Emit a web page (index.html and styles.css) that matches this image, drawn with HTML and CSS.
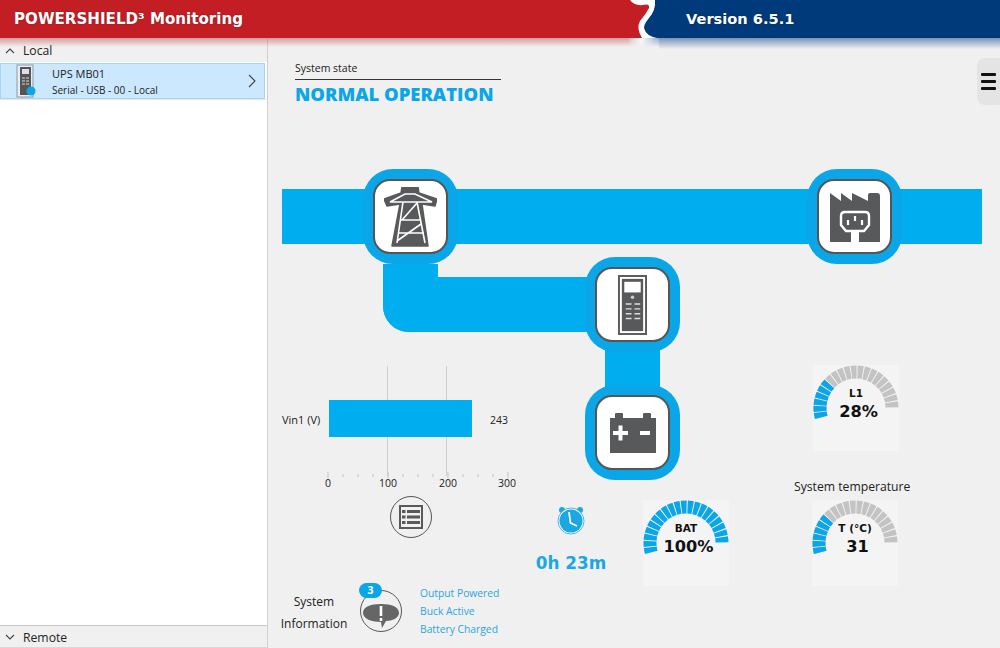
FILE: index.html
```html
<!DOCTYPE html>
<html lang="en">
<head>
    <meta charset="UTF-8">
    <title>POWERSHIELD3 Monitoring</title>
    <link rel="stylesheet" href="styles.css">
</head>
<body>
    <svg class="defs">
        <defs>
            <path id="arc" d="M8.23 52.32A36 36 0 1 1 79 43"/>
        </defs>
    </svg>

    <header class="topbar">
        <div class="brand">POWERSHIELD³ Monitoring</div>
        <svg class="wave" width="30" height="38" viewBox="0 0 30 38">
            <rect width="30" height="38" fill="#fff"/>
            <path d="M0 0H1Q5 6 14 5Q21 3 20 8Q17 14 11 21Q7 28 13 38H0Z" fill="#c41e25"/>
            <path d="M26 0H30V38H28Q17 36 15 28Q15 24 20 18Q27 10 26 0Z" fill="#003a7a"/>
        </svg>
        <div class="version">Version 6.5.1</div>
    </header>

    <div class="layout">
        <aside class="sidebar">
            <div class="group-head">
                <svg width="10" height="6" viewBox="0 0 10 6"><path d="M1 5L5 1L9 5" class="chev"/></svg>
                <span>Local</span>
            </div>
            <div class="device">
                <svg class="device-icon" width="22" height="34" viewBox="0 0 22 34">
                    <rect x="1" y="1" width="16" height="32" fill="#e8eef3" stroke="#8a98a4"/>
                    <rect x="4" y="3" width="11" height="28" fill="#555"/>
                    <rect x="6" y="5" width="7" height="5" fill="#dde"/>
                    <path d="M6 14h3M10 14h3M6 17h3M10 17h3M6 20h3M10 20h3" stroke="#ddd"/>
                    <circle cx="15" cy="27" r="4.5" fill="#0fa5e9"/>
                </svg>
                <div class="device-text">
                    <div>UPS MB01</div>
                    <div class="device-sub">Serial - USB - 00 - Local</div>
                </div>
                <svg class="device-arrow" width="8" height="14" viewBox="0 0 8 14"><path d="M1 1L7 7L1 13" class="chev"/></svg>
            </div>
            <div class="sidebar-space"></div>
            <div class="group-head remote">
                <svg width="10" height="6" viewBox="0 0 10 6"><path d="M1 1L5 5L9 1" class="chev"/></svg>
                <span>Remote</span>
            </div>
        </aside>

        <main class="canvas">
            <div class="state">
                <div class="state-label">System state</div>
                <div class="state-value">NORMAL OPERATION</div>
            </div>

            <div class="menu-tab">
                <span></span><span></span><span></span>
            </div>

            <!-- power flow lines -->
            <div class="line line-main"></div>
            <div class="line line-bypass"></div>
            <div class="line line-bat"></div>

            <div class="node node-input">
                <div class="node-face">
                    <svg width="53" height="60" viewBox="0 0 53 60">
                        <path d="M18 0H34L35 6L53 12L51 19L38 17L44 59H8L16 17L3 19L0 12L17 6Z" fill="#58595b" stroke="#58595b" stroke-width="1.500" stroke-linejoin="round"/>
                        <path d="M6 15L21 7H31L48 15ZM19 15L13 56M33 15L41 56M17 33H36M18 33L33 16M13 54L37 37M14 46H40" fill="none" stroke="#fff" stroke-width="1.600"/>
                    </svg>
                </div>
            </div>
            <div class="node node-output">
                <div class="node-face">
                    <svg width="50" height="50" viewBox="0 0 50 50">
                        <path d="M0 1L11 9V1L22 9V1L38 9V3Q38 1 40 1H47Q50 1 50 4V50H0Z" fill="#58595b"/>
                        <rect x="21" y="38" width="8" height="12" fill="#fff"/>
                        <path d="M15 20H35Q39 20 39 24V33L34 39H16L11 33V24Q11 20 15 20Z" fill="#58595b" stroke="#fff" stroke-width="2.400"/>
                        <path d="M25 24V29M18 28V33M32 28V33" stroke="#fff" stroke-width="2.200"/>
                    </svg>
                </div>
            </div>
            <div class="node node-ups">
                <div class="node-face">
                    <svg width="29" height="60" viewBox="0 0 30 62">
                        <rect x="1" y="1" width="28" height="60" fill="#fff" stroke="#58595b" stroke-width="2"/>
                        <rect x="4" y="4" width="22" height="54" fill="#58595b"/>
                        <rect x="6.500" y="7" width="17" height="11" fill="#fff"/>
                        <circle cx="15" cy="23" r="1.800" fill="#ccc"/>
                        <path d="M8 30h6M17 30h6M8 35h6M17 35h6M8 40h6M17 40h6M8 45h6M17 45h6" stroke="#ddd" stroke-width="1.400"/>
                    </svg>
                </div>
            </div>
            <div class="node node-battery">
                <div class="node-face">
                    <svg width="46" height="40" viewBox="0 0 46 40">
                        <path d="M0 5H5V1Q5 0 6 0H12Q13 0 13 1V5H33V1Q33 0 34 0H40Q41 0 41 1V5H46V40H0Z" fill="#58595b"/>
                        <path d="M3 20H18M10.500 12.500V27.500M30 20H40" stroke="#fff" stroke-width="4"/>
                    </svg>
                </div>
            </div>

            <!-- input voltage bar chart -->
            <div class="chart">
                <div class="grid-line grid-100"></div>
                <div class="grid-line grid-200"></div>
                <div class="bar-label">Vin1 (V)</div>
                <div class="bar"></div>
                <div class="bar-value">243</div>
                <svg class="ticks" width="182" height="6" viewBox="0 0 182 6">
                    <path d="M1 0v6M16 2v3M31 2v3M46 2v3M61 0v6M76 2v3M91 2v3M106 2v3M121 0v6M136 2v3M151 2v3M166 2v3M181 0v6" stroke="#c4c4c4"/>
                </svg>
                <div class="tick-label tick-0">0</div>
                <div class="tick-label tick-100">100</div>
                <div class="tick-label tick-200">200</div>
                <div class="tick-label tick-300">300</div>
            </div>
            <div class="table-btn">
                <svg width="24" height="24" viewBox="0 0 24 24">
                    <rect x="1" y="1" width="22" height="22" fill="none" stroke="#58595b" stroke-width="2"/>
                    <path d="M3 6.500H6.500M8 6.500H21M3 12H6.500M8 12H21M3 17.500H6.500M8 17.500H21" stroke="#58595b" stroke-width="2.800"/>
                </svg>
            </div>

            <!-- autonomy -->
            <div class="autonomy">
                <svg width="28" height="29" viewBox="0 0 28 29">
                    <circle cx="5" cy="4" r="3" fill="#1aa7e2"/>
                    <circle cx="23" cy="4" r="3" fill="#1aa7e2"/>
                    <circle cx="14" cy="15" r="13" fill="#fff"/>
                    <circle cx="14" cy="15" r="13" fill="none" stroke="#1aa7e2" stroke-width="0.800"/>
                    <circle cx="14" cy="15" r="11.500" fill="#1aa7e2"/>
                    <path d="M12 6L13.500 17L20 20" fill="none" stroke="#fff" stroke-width="1.800"/>
                </svg>
                <div class="autonomy-time">0h 23m</div>
            </div>

            <div class="gauge gauge-bat">
                <svg width="86" height="60" viewBox="0 0 86 60">
                    <use href="#arc" class="seg seg-on seg-all"/>
                </svg>
                <div class="gauge-name">BAT</div>
                <div class="gauge-value">100%</div>
            </div>

            <div class="gauge gauge-load">
                <svg width="86" height="60" viewBox="0 0 86 60">
                    <use href="#arc" class="seg seg-off seg-all"/>
                    <use href="#arc" class="seg seg-on seg-part"/>
                </svg>
                <div class="gauge-name">L1</div>
                <div class="gauge-value">28%</div>
            </div>

            <div class="temp-title">System temperature</div>
            <div class="gauge gauge-temp">
                <svg width="86" height="60" viewBox="0 0 86 60">
                    <use href="#arc" class="seg seg-off seg-all"/>
                    <use href="#arc" class="seg seg-on seg-part"/>
                </svg>
                <div class="gauge-name">T (°C)</div>
                <div class="gauge-value">31</div>
            </div>

            <!-- system information -->
            <div class="sysinfo">
                <div class="sysinfo-title">System<br>Information</div>
                <div class="alert">
                    <svg width="42" height="42" viewBox="0 0 42 42">
                        <circle cx="21" cy="21" r="20.500" fill="none" stroke="#58595b" stroke-width="1"/>
                        <path d="M21 14C32 14 39 17 39 23C39 28 32 31 26 31L22 38L21 32C10 32 3 28 3 23C3 17 10 14 21 14Z" fill="#666"/>
                        <path d="M21 16V26M21 28V31" stroke="#fff" stroke-width="2.600"/>
                    </svg>
                    <div class="alert-badge">3</div>
                </div>
                <div class="sysinfo-list">
                    <div>Output Powered</div>
                    <div>Buck Active</div>
                    <div>Battery Charged</div>
                </div>
            </div>
        </main>
    </div>
</body>
</html>
```

FILE: styles.css
```css
html, body {
    margin: 0;
    height: 100%;
    overflow: hidden;
}
body {
    font-family: "Open Sans", "Noto Sans", sans-serif;
    font-size: 12px;
    color: #222;
    background: #f0f0f0;
    display: flex;
    flex-direction: column;
}
.defs {
    width: 0;
    height: 0;
    position: absolute;
}

/* top bar */
.topbar {
    display: flex;
    height: 38px;
    flex: none;
    position: relative;
    z-index: 2;
    font-family: "DejaVu Sans", sans-serif;
    font-weight: bold;
    color: #fff;
    text-shadow: 0 0 2px rgba(0,0,0,0.3);
}
.topbar::after {
    content: "";
    position: absolute;
    left: 629px;
    width: 30px;
    top: 100%;
    height: 9px;
    background: linear-gradient(90deg, rgba(190,120,120,0.5), rgba(255,255,255,0.8) 40%, rgba(80,115,165,0.6));
    -webkit-mask-image: linear-gradient(#000, transparent);
}
.brand {
    width: 629px;
    box-sizing: border-box;
    padding-left: 14px;
    line-height: 38px;
    font-size: 15.100px;
    background: #c41e25;
    position: relative;
}
.brand::after {
    content: "";
    position: absolute;
    left: 0;
    right: 0;
    top: 100%;
    height: 9px;
    background: linear-gradient(rgba(190,90,90,0.55), rgba(240,240,240,0));
}
.wave {
    flex: none;
    display: block;
}
.version {
    flex: 1;
    padding-left: 27px;
    line-height: 38px;
    font-size: 14.600px;
    background: #003a7a;
    position: relative;
}
.version::after {
    content: "";
    position: absolute;
    left: 0;
    right: 0;
    top: 100%;
    height: 11px;
    background: linear-gradient(rgba(80,115,165,0.75), rgba(240,240,240,0));
}

.layout {
    flex: 1;
    display: flex;
    min-height: 0;
}

/* sidebar */
.sidebar {
    width: 267px;
    flex: none;
    display: flex;
    flex-direction: column;
    background: #fff;
    border-right: 1px solid #d0d0d0;
}
.group-head {
    height: 24px;
    display: flex;
    align-items: center;
    gap: 8px;
    padding-left: 5px;
    padding-top: 1px;
    box-sizing: border-box;
    background: #f0f0f0;
    font-size: 12.200px;
}
.group-head.remote {
    height: 23px;
    border-top: 1px solid #c8c8c8;
    border-bottom: 1px solid #d8d8d8;
}
.chev {
    fill: none;
    stroke: #444;
    stroke-width: 1.100;
}
.device {
    height: 36px;
    margin-top: 1px;
    margin-right: 2px;
    box-sizing: border-box;
    display: flex;
    align-items: center;
    background: #cce8ff;
    border: 1px solid #a8d4f5;
    padding: 0 8px 0 15px;
    font-size: 11px;
    line-height: 17px;
}
.device-text {
    flex: 1;
    margin-left: 14px;
    padding-top: 2px;
}
.device-sub {
    font-size: 10px;
}
.sidebar-space {
    flex: 1;
    border-top: 1px solid #e8e8e8;
}

/* main canvas: the flow diagram sits at fixed places */
.canvas {
    flex: 1;
    position: relative;
}
.state {
    position: absolute;
    left: 27px;
    top: 23px;
    width: 206px;
}
.state-label {
    font-size: 10.500px;
    line-height: 14px;
    padding-bottom: 4px;
    border-bottom: 1px solid #333;
}
.state-value {
    color: #0ba6e8;
    font-weight: 800;
    font-size: 18.400px;
    line-height: 27px;
    white-space: nowrap;
}
.menu-tab {
    position: absolute;
    right: 0;
    top: 20px;
    width: 23px;
    height: 47px;
    box-sizing: border-box;
    padding: 15px 0 0 4px;
    background: #e4e4e4;
    border-radius: 8px 0 0 8px;
    display: flex;
    flex-direction: column;
    gap: 4px;
}
.menu-tab span {
    width: 15px;
    height: 3px;
    background: #111;
    border-radius: 1px;
}

.line {
    position: absolute;
    background: #00adef;
}
.line-main {
    left: 14px;
    top: 151px;
    width: 700px;
    height: 55px;
}
.line-bypass {
    left: 115px;
    top: 226px;
    width: 220px;
    height: 68px;
    box-sizing: border-box;
    background: none;
    border-left: 55px solid #00adef;
    border-bottom: 55px solid #00adef;
    border-bottom-left-radius: 26px;
}
.line-bat {
    left: 337px;
    top: 310px;
    width: 55px;
    height: 40px;
}

.node {
    position: absolute;
    width: 95px;
    height: 95px;
    box-sizing: border-box;
    padding: 10px;
    background: #0ba6e8;
    border-radius: 30px;
}
.node-input { left: 95px; top: 131px; }
.node-output { left: 539px; top: 131px; }
.node-ups { left: 317px; top: 219px; }
.node-battery { left: 317px; top: 347px; }
.node-face {
    width: 100%;
    height: 100%;
    box-sizing: border-box;
    display: flex;
    align-items: center;
    justify-content: center;
    background: #fff;
    border: 2px solid #555;
    border-radius: 17px;
}

/* bar chart */
.chart {
    position: absolute;
    left: 14px;
    top: 328px;
    width: 240px;
    height: 128px;
}
.grid-line {
    position: absolute;
    top: 0;
    width: 1px;
    height: 110px;
    background: #cfcfcf;
}
.grid-100 { left: 105px; }
.grid-200 { left: 164px; }
.bar-label {
    position: absolute;
    left: 0;
    top: 46px;
    font-size: 11px;
}
.bar {
    position: absolute;
    left: 47px;
    top: 34px;
    width: 143px;
    height: 37px;
    background: #00adef;
}
.bar-value {
    position: absolute;
    left: 208px;
    top: 47px;
    font-size: 10.500px;
}
.ticks {
    position: absolute;
    left: 45px;
    top: 106px;
}
.tick-label {
    position: absolute;
    top: 110px;
    width: 30px;
    text-align: center;
    font-size: 10.500px;
}
.tick-0 { left: 31px; }
.tick-100 { left: 91px; }
.tick-200 { left: 151px; }
.tick-300 { left: 210px; }
.table-btn {
    position: absolute;
    left: 122px;
    top: 458px;
    width: 42px;
    height: 42px;
    box-sizing: border-box;
    border: 1px solid #555;
    border-radius: 50%;
    display: flex;
    align-items: center;
    justify-content: center;
}

/* autonomy */
.autonomy {
    position: absolute;
    left: 260px;
    top: 468px;
    width: 86px;
    display: flex;
    flex-direction: column;
    align-items: center;
    gap: 18px;
}
.autonomy-time {
    color: #1aa7e2;
    font-family: "DejaVu Sans", sans-serif;
    font-weight: bold;
    font-size: 16.800px;
    line-height: 20px;
    white-space: nowrap;
}

/* gauges */
.gauge {
    position: absolute;
    width: 86px;
    height: 86px;
    background: #f4f4f4;
    text-align: center;
    font-family: "DejaVu Sans", sans-serif;
    font-weight: bold;
    color: #111;
}
.gauge svg {
    position: absolute;
    left: 0;
    top: 0;
}
.gauge-bat { left: 375px; top: 462px; }
.gauge-load { left: 545px; top: 327px; }
.gauge-temp { left: 544px; top: 462px; }
.gauge-name {
    padding-top: 21px;
    font-size: 10.500px;
    line-height: 15px;
    position: relative;
}
.gauge-value {
    margin-top: 1px;
    padding-left: 5px;
    font-size: 16.200px;
    line-height: 20px;
    position: relative;
}
.seg {
    fill: none;
    stroke-width: 13;
}
.seg-on { stroke: #0ba6e8; }
.seg-off { stroke: #c3c3c3; }
.seg-all { stroke-dasharray: 5.200 0.930; }
.seg-part { stroke-dasharray: 5.200 0.930 5.200 0.930 5.200 0.930 5.200 0.930 5.200 0.930 5.200 200; }
.temp-title {
    position: absolute;
    left: 526px;
    top: 440px;
    font-size: 12.200px;
    white-space: nowrap;
}

/* system information */
.sysinfo {
    position: absolute;
    left: 11px;
    top: 546px;
    display: flex;
    align-items: center;
}
.sysinfo-title {
    width: 70px;
    margin-top: 4px;
    text-align: center;
    font-size: 12px;
    line-height: 22px;
}
.alert {
    position: relative;
    margin-left: 11px;
    width: 42px;
    height: 42px;
}
.alert svg {
    display: block;
}
.alert-badge {
    position: absolute;
    left: -1px;
    top: -7px;
    width: 23px;
    height: 15px;
    border-radius: 8px;
    background: #0ba6e8;
    color: #fff;
    font-size: 10.500px;
    font-weight: bold;
    line-height: 15px;
    text-align: center;
}
.sysinfo-list {
    margin-left: 18px;
    color: #2ba6dc;
    font-size: 10.300px;
    line-height: 18.200px;
}
```
